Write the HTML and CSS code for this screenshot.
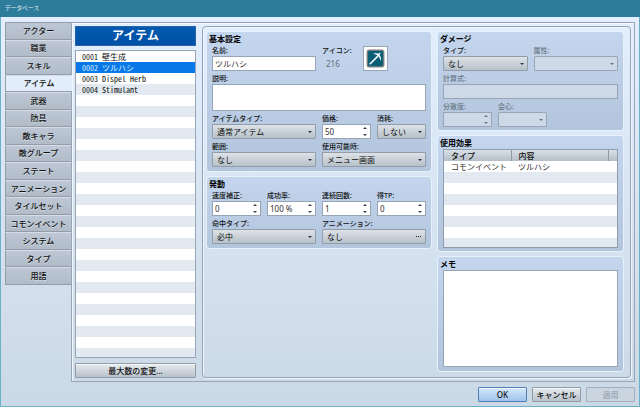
FILE: index.html
```html
<!DOCTYPE html>
<html lang="ja">
<head>
<meta charset="utf-8">
<title>データベース</title>
<link rel="stylesheet" href="styles.css">
</head>
<body>
<div class="window">
  <header class="titlebar">データベース</header>
  <main class="body">
    <nav class="tabs">
      <button class="tab">アクター</button>
      <button class="tab">職業</button>
      <button class="tab">スキル</button>
      <button class="tab active">アイテム</button>
      <button class="tab">武器</button>
      <button class="tab">防具</button>
      <button class="tab">敵キャラ</button>
      <button class="tab">敵グループ</button>
      <button class="tab">ステート</button>
      <button class="tab">アニメーション</button>
      <button class="tab">タイルセット</button>
      <button class="tab">コモンイベント</button>
      <button class="tab">システム</button>
      <button class="tab">タイプ</button>
      <button class="tab">用語</button>
    </nav>
    <section class="page">
      <div class="browser">
        <h1 class="heading">アイテム</h1>
        <ul class="list">
          <li><span class="half">0001 </span>壁生成</li>
          <li class="selected"><span class="half">0002 </span>ツルハシ</li>
          <li><span class="half">0003 Dispel Herb</span></li>
          <li><span class="half">0004 Stimulant</span></li>
        </ul>
        <button class="btn">最大数の変更...</button>
      </div>
      <div class="editor">
        <div class="column main">
          <section class="group">
            <h2>基本設定</h2>
            <div class="fields">
              <div class="field span2"><label for="name">名前:</label><input class="box" id="name" value="ツルハシ"></div>
              <div class="field"><label for="icon">アイコン:</label><output class="number" id="icon">216</output></div>
              <button class="icon" aria-label="アイコン">
                <svg viewBox="0 0 24 24">
                  <rect x="3.5" y="3.5" width="17" height="17" rx="2" fill="#075e75" stroke="#747e80" stroke-width="1.6"/>
                  <path d="M6 18 14.500 9.500" stroke="#fff" stroke-width="1.6" fill="none"/>
                  <path d="M9.800 7C12 6.200 14.300 6.500 15.900 8.100S18.300 12 17.600 14.500C17 12.400 16 10.700 14.700 9.400S12 7.500 9.800 7Z" fill="#fff"/>
                  <path d="M14.300 9.300 16.600 6.300" stroke="#fff" stroke-width="1.500"/>
                </svg>
              </button>
              <div class="field span4"><label for="desc">説明:</label><textarea class="box tall" id="desc"></textarea></div>
              <div class="field span2"><label for="itype">アイテムタイプ:</label><span class="drop"><select id="itype"><option>通常アイテム</option></select></span></div>
              <div class="field"><label for="price">価格:</label><span class="spin"><input class="box" id="price" value="50"></span></div>
              <div class="field"><label for="consume">消耗:</label><span class="drop"><select id="consume"><option>しない</option></select></span></div>
              <div class="field span2"><label for="scope">範囲:</label><span class="drop"><select id="scope"><option>なし</option></select></span></div>
              <div class="field span2"><label for="occasion">使用可能時:</label><span class="drop"><select id="occasion"><option>メニュー画面</option></select></span></div>
            </div>
          </section>
          <section class="group">
            <h2>発動</h2>
            <div class="fields">
              <div class="field"><label for="speed">速度補正:</label><span class="spin"><input class="box" id="speed" value="0"></span></div>
              <div class="field"><label for="rate">成功率:</label><span class="spin"><input class="box" id="rate" value="100 %"></span></div>
              <div class="field"><label for="repeat">連続回数:</label><span class="spin"><input class="box" id="repeat" value="1"></span></div>
              <div class="field"><label for="tp">得TP:</label><span class="spin"><input class="box" id="tp" value="0"></span></div>
              <div class="field span2"><label for="hit">命中タイプ:</label><span class="drop"><select id="hit"><option>必中</option></select></span></div>
              <div class="field span2"><label for="anim">アニメーション:</label><button class="picker" id="anim"><span>なし</span><span class="dots"></span></button></div>
            </div>
          </section>
        </div>
        <div class="column side">
          <section class="group">
            <h2>ダメージ</h2>
            <div class="fields pair">
              <div class="field"><label for="dtype">タイプ:</label><span class="drop"><select id="dtype"><option>なし</option></select></span></div>
              <div class="field off"><label for="element">属性:</label><span class="drop"><select id="element" disabled></select></span></div>
              <div class="field span2 off"><label for="formula">計算式:</label><input class="box" id="formula" disabled></div>
              <div class="short span2">
                <div class="field off"><label for="variance">分散度:</label><span class="spin"><input class="box" id="variance" disabled></span></div>
                <div class="field off"><label for="critical">会心:</label><span class="drop"><select id="critical" disabled></select></span></div>
              </div>
            </div>
          </section>
          <section class="group">
            <h2>使用効果</h2>
            <div class="effects">
              <table>
                <thead><tr><th class="kind">タイプ</th><th>内容</th><th class="end"></th></tr></thead>
                <tbody><tr><td>コモンイベント</td><td colspan="2">ツルハシ</td></tr></tbody>
              </table>
            </div>
          </section>
          <section class="group grow">
            <h2><label for="memo">メモ</label></h2>
            <textarea class="box memo" id="memo"></textarea>
          </section>
        </div>
      </div>
    </section>
  </main>
  <footer class="actions">
    <button class="btn primary">OK</button>
    <button class="btn">キャンセル</button>
    <button class="btn" disabled>適用</button>
  </footer>
</div>
</body>
</html>
```

FILE: styles.css
```css
* { box-sizing: border-box; }

body {
  margin: 0;
  font: 8px/10px "Noto Sans", "Noto Sans CJK JP", sans-serif;
  color: #111;
}

button, input, select, textarea {
  font: inherit;
  color: inherit;
  margin: 0;
  padding: 0;
  border-radius: 0;
}

.window {
  min-height: 100vh;
  display: flex;
  flex-direction: column;
  border: 1px solid #6bafca;
  border-top: 0;
  background: linear-gradient(#e4f0ff, #cbd8e5);
}

.titlebar {
  height: 17px;
  margin: 0 -1px;
  padding-left: 5px;
  background: #2d7d9a;
  color: #e4f0f4;
  font-size: 6px;
  line-height: 17px;
  font-feature-settings: "palt";
}

.body {
  flex: 1;
  display: flex;
  padding: 5px 4px 0;
}

.tabs {
  width: 66px;
  height: 263px;
  display: flex;
  flex-direction: column;
  z-index: 1;
}

.tab {
  flex: 1;
  border: 1px solid #949ca8;
  border-top-color: #d6dde6;
  border-right: 0;
  background: linear-gradient(#bdc7d5, #b1bcc8);
  text-shadow: 0 1px #d5dde6;
  font-weight: 500;
}

.tab:first-child { border-top-color: #949ca8; }

.tab.active {
  margin-right: -1px;
  background: #e3eefc;
}

.page {
  flex: 1;
  display: flex;
  gap: 6px;
  padding: 3px 3px 3px;
  border: 1px solid #9aa6b5;
  box-shadow: inset 1px 1px #f0f7ff;
}

.browser {
  width: 121px;
  display: flex;
  flex-direction: column;
}

.heading {
  margin: 0 0 4px;
  height: 20px;
  border: 1px solid #2a62a8;
  background: linear-gradient(#0459ae, #0050a6);
  color: #fff;
  font-size: 12px;
  line-height: 18px;
  text-align: center;
}

.list {
  flex: 1;
  margin: 0 0 5px;
  padding: 0;
  list-style: none;
  border: 1px solid #98a5b6;
  background: repeating-linear-gradient(#fff 0 11px, #e2e9f0 11px 22px);
}

.list li {
  height: 11px;
  line-height: 11px;
  padding-left: 6px;
  white-space: pre;
}

.list .selected {
  background: #0878e8;
  color: #d8ecff;
}

.half {
  font-family: "Noto Sans CJK JP", sans-serif;
  font-feature-settings: "hwid";
}

.btn {
  height: 15px;
  border: 1px solid #929ba6;
  border-radius: 1px;
  background: linear-gradient(#e6eaee, #b9c2cb);
  box-shadow: inset 0 1px #f6f8fa;
  font-weight: 500;
}

.editor {
  flex: 1;
  display: flex;
  gap: 7px;
  padding: 5px 7px 6px 4px;
  border: 1px solid #95a2b3;
  border-radius: 4px;
  box-shadow: inset 1px 1px #eef6ff, 1px 1px #edf5fd;
}

.column {
  display: flex;
  flex-direction: column;
  gap: 6px;
}

.main { flex: 224; }
.side { flex: 185; }

.group {
  padding: 0 5px 4px;
  border-radius: 3px;
  background: linear-gradient(#c3d6ee, #b2c5dd);
  box-shadow: 0 0 0 1px #e6f1fc;
}

.side .group { padding-bottom: 3px; }

.side .grow {
  flex: 1;
  display: flex;
  flex-direction: column;
  padding-bottom: 4px;
}

h2 {
  margin: 0 0 0 -3px;
  padding-top: 1px;
  font-size: 8px;
  line-height: 12px;
  color: #000;
}

.fields {
  display: grid;
  grid-template-columns: repeat(4, minmax(0, 1fr));
  gap: 2px 6px;
}

.pair { grid-template-columns: repeat(2, minmax(0, 1fr)); }
.span2 { grid-column: span 2; }
.span4 { grid-column: span 4; }

.field {
  display: flex;
  flex-direction: column;
  min-width: 0;
}

.field label {
  font-size: 7px;
  line-height: 11px;
  font-weight: 500;
  white-space: nowrap;
}

.off label { color: #6b7684; }

.short {
  display: grid;
  grid-template-columns: 49px 49px;
  gap: 6px;
}

.box {
  display: block;
  width: 100%;
  height: 15px;
  padding: 0 2px;
  border: 1px solid #97a4b5;
  background: #fff;
  color: #333;
  resize: none;
}

.box:disabled, .drop select:disabled {
  border-color: #98a5b4;
  background: #cdd9e6;
  opacity: 1;
}

.tall { height: 27px; }
.memo { flex: 1; }

.number {
  padding-left: 4px;
  line-height: 15px;
  color: #626e7c;
}

.icon {
  justify-self: start;
  align-self: end;
  width: 25px;
  height: 25px;
  margin-left: -14px;
  border: 1px solid #98a6b8;
  background: #fff;
}

.icon svg {
  display: block;
  width: 23px;
  height: 23px;
}

.drop, .spin {
  position: relative;
  display: block;
}

.drop select, .picker {
  appearance: none;
  display: block;
  width: 100%;
  height: 15px;
  padding: 0 4px;
  border: 1px solid #929daa;
  border-radius: 1px;
  background: linear-gradient(#dde2e6, #b7c1ca);
}

.drop::after, .spin::before, .spin::after {
  content: "";
  position: absolute;
  right: 4px;
  border: 2px solid transparent;
  pointer-events: none;
}

.drop::after {
  top: 7px;
  border-top-color: #26313c;
  border-bottom: 0;
}

.spin::before {
  top: 3px;
  border-bottom-color: #36414d;
  border-top: 0;
}

.spin::after {
  top: 10px;
  border-top-color: #36414d;
  border-bottom: 0;
}

.off .drop::after { border-top-color: #667482; }
.off .spin::before { border-bottom-color: #667482; }
.off .spin::after { border-top-color: #667482; }

.picker {
  display: flex;
  align-items: center;
  justify-content: space-between;
}

.dots {
  width: 5px;
  border-top: 1px dotted #222;
}

.effects {
  height: 99px;
  border: 1px solid #8f9cac;
  background: repeating-linear-gradient(#e2e9f0 0 11px, #fff 11px 22px);
}

table {
  width: 100%;
  border-collapse: collapse;
  table-layout: fixed;
}

th, td {
  height: 11px;
  padding: 0 0 0 7px;
  line-height: 11px;
  text-align: left;
  font-weight: 400;
}

td { color: #333; }

th {
  background: linear-gradient(#d9e0e6, #b5bfc9);
  border-right: 1px solid #8f9ba8;
  font-weight: 500;
}

.kind { width: 67px; }

.end {
  width: 9px;
  padding: 0;
  border-right: 0;
}

.actions {
  display: flex;
  justify-content: flex-end;
  gap: 5px;
  padding: 5px 4px 4px;
}

.actions .btn { width: 49px; }

.actions .primary {
  border-color: #4f7fb5;
  background: linear-gradient(#d5e7fb, #9fc3eb);
}

.actions .btn:disabled {
  border-color: #a2aebc;
  background: #cad5e0;
  box-shadow: none;
  color: #99a5b2;
}
```
